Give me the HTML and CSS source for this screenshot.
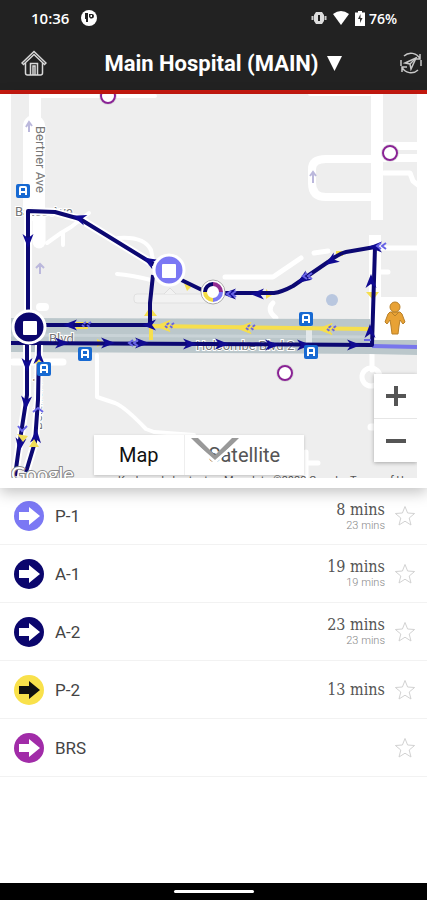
FILE: index.html
```html
<!DOCTYPE html>
<html lang="en">
<head>
    <meta charset="UTF-8">
    <meta name="viewport" content="width=device-width, initial-scale=1.0">
    <title>Main Hospital (MAIN)</title>
    <link rel="stylesheet" href="styles.css">
</head>
<body>
    <!-- Phone status bar -->
    <div class="status-bar">
        <span>10:36</span>
        <svg class="status-app" width="16" height="16" viewBox="0 0 16 16">
            <circle cx="8" cy="8" r="8" fill="#fff"/>
            <path d="M4 3h3v9H5V9H4zM8 4h3q2 0 2 2t-2 2.500H9.500L8 7z" fill="#222"/>
            <path d="M9.500 5h1.500v2H9.500z" fill="#fff"/>
        </svg>
        <div class="status-right">
            <svg width="16" height="14" viewBox="0 0 16 14">
                <path d="M5 1h6l2 3v6l-2 3H5l-2-3V4z" fill="#ddd"/>
                <path d="M1.500 5v4M14.500 5v4" stroke="#ccc" stroke-width="2"/>
                <path d="M8 4v6" stroke="#222" stroke-width="2"/>
            </svg>
            <svg width="16" height="14" viewBox="0 0 16 14"><path d="M0 3Q8-3 16 3L8 14z" fill="#fff"/></svg>
            <svg width="10" height="15" viewBox="0 0 10 15">
                <path d="M3 0h4v1.500h3V15H0V1.500h3z" fill="#fff"/>
                <path d="M5.500 3L3 8h2v4l2.500-5h-2z" fill="#333"/>
            </svg>
            <span>76%</span>
        </div>
    </div>

    <!-- Header -->
    <header class="header">
        <button class="icon-button" aria-label="Home">
            <svg width="26" height="26" viewBox="0 0 26 26" fill="none" stroke="#d8d8d8" stroke-width="1.500">
                <path d="M1 13L13 1.500 25 13l-1.500 1.500L13 4.500 2.500 14.500z"/>
                <path d="M4.500 13v10q0 2 2 2h13q2 0 2-2V13M9.500 25V13.500h7V25M12 25v-9h2v9"/>
            </svg>
        </button>
        <button class="title">Main Hospital (MAIN) <svg width="15" height="15" viewBox="0 0 15 15"><path d="M0 0h15L7.500 15z" fill="#fff"/></svg></button>
        <button class="icon-button" aria-label="Refresh location">
            <svg width="24" height="24" viewBox="0 0 24 24" fill="none" stroke="#c8c8c8" stroke-width="1.500">
                <path d="M5 5a10 10 0 0 1 16 3M21 3v5h-5M2 9v6M19 19A10 10 0 0 1 3 16M3 21v-5h5M22 15V9"/>
                <path d="M17 7L6 12l5 1 1 5z"/>
                <path d="M17 7l-6 6"/>
            </svg>
        </button>
    </header>

    <!-- Map -->
    <section class="map-section">
        <div class="map">
            <svg class="map-canvas" viewBox="11 94 406 384" preserveAspectRatio="xMidYMid slice">
                <defs>
                    <path id="arrow" d="M7 0L-7-5.500-3 0-7 5.500z"/>
                    <g id="bus">
                        <rect x="-7" y="-7" width="14" height="14" rx="2" fill="#1769d2"/>
                        <path d="M-4 4v-7q0-2 2-2h4q2 0 2 2v7H2V2h-4v2z" fill="#fff"/>
                        <path d="M-2-3h4v3h-4z" fill="#1769d2"/>
                    </g>
                    <g id="stop">
                        <circle r="9" fill="#ccc" opacity=".5"/>
                        <circle r="7" fill="#fff" stroke="#8a2395" stroke-width="2"/>
                    </g>
                    <path id="chevrons" d="M3-3L-1 0l4 3M8-3L4 0l4 3" fill="none"/>
                </defs>
                <rect x="11" y="94" width="406" height="384" fill="#eee"/>

                <!-- Roads -->
                <g fill="none" stroke="#fff" stroke-linecap="round" stroke-linejoin="round">
                    <path d="M35 90v32" stroke-width="12"/>
                    <path d="M34 126v84" stroke-width="22"/>
                    <path d="M39 214v28" stroke-width="13"/>
                    <path d="M40 96h115M310 94h60" stroke-width="4"/>
                    <path d="M377 90v130M375 235v115" stroke-width="12" stroke-linecap="butt"/>
                    <path d="M384 146h40M384 158h40" stroke-width="8"/>
                    <path d="M376 159h-50q-14 0-14 10v14q0 14 14 14h50" stroke-width="8"/>
                    <path d="M384 173h26l3 8 10 8" stroke-width="5"/>
                    <path d="M225 277h48l28-19M314 253l14-2M380 248h40M380 272h8" stroke-width="5"/>
                    <path d="M273 303q-7 7 3 15" stroke-width="5"/>
                    <path d="M47 243l14-10 10-6 18-14M63 233v12" stroke-width="4"/>
                    <path d="M118 238q26-2 33 12l3 15M117 274q14 1 34 6" stroke-width="4"/>
                    <path d="M45 307h-5" stroke-width="8"/>
                    <path d="M97 355v42l18 6q10 4 31 26l8 3 40 3" stroke-width="4"/>
                    <path d="M13 362h50M371 427h6" stroke-width="7"/>
                    <circle cx="371" cy="377" r="9" stroke-width="5"/>
                    <path d="M372 350v20" stroke-width="5"/>
                    <path d="M306 452v30M306 463h12" stroke-width="5"/>
                </g>
                <rect x="380" y="297" width="37" height="43" fill="#fff"/>
                <rect x="134" y="294" width="80" height="9" rx="3" fill="#f2f2f2" stroke="#e0e0e0"/>
                <path d="M164 294l6-6 6 6" fill="#f2f2f2" stroke="#ddd"/>
                <circle cx="332" cy="300" r="6" fill="#b9c7df"/>

                <!-- Holcombe Blvd -->
                <path d="M11 318l359 1v21h47v15l-47-1-359-2z" fill="#bbc7cb"/>
                <path d="M11 335l359 2" stroke="#c9d3d7" stroke-width="3"/>
                <path d="M309 319v34" stroke="#e3e8ea" stroke-width="6"/>

                <!-- Road names -->
                <g class="road-name">
                    <text transform="translate(36 126) rotate(90)">Bertner Ave</text>
                    <text x="15" y="216">Bates Ave</text>
                    <text x="49" y="343">Blvd</text>
                    <text x="196" y="350">Holcombe Blvd 2</text>
                    <text transform="translate(42 430) rotate(-90)">Bertner Ave</text>
                </g>
                <g fill="none" stroke="#bbb8dc" stroke-width="2">
                    <path d="M40 274v-10M36 268l4-4 4 4M313 183v-11M310 176l3-4 3 4M29 132v-10M26 127l3-5 3 4"/>
                </g>

                <!-- Yellow line -->
                <g fill="#f6df4e" stroke="#f6df4e">
                    <path d="M152 326l217 3M151 326v14" fill="none" stroke-width="4"/>
                    <use href="#arrow" transform="translate(163 326) rotate(180)"/>
                    <use href="#arrow" transform="translate(244 328) rotate(180)"/>
                    <use href="#arrow" transform="translate(325 329) rotate(180)"/>
                    <path d="M76 322h12v7H76zM97 339l8 4-8 4zM336 251h7v5h-7zM266 289l6 6-6 4zM366 292h13l-6 8zM144 316l6-9 7 9zM182 278l9 9-4 4z" stroke="none"/>
                </g>

                <!-- Blue lines -->
                <path d="M372 346l45 1" stroke="#7876ec" stroke-width="4"/>
                <g fill="none" stroke="#0c0872" stroke-width="4" stroke-linejoin="round">
                    <path class="route-edge" d="M28 312V211l27 1 25 7 70 43"/>
                    <path d="M28 312V211l27 1 25 7 70 43 19 12 33 16"/>
                    <path d="M222 293h52q8-1 19-7l35-24q10-8 18-10l29-5-3 98-361-2"/>
                    <path d="M44 325h106v-22l3-28"/>
                    <path class="route-edge" d="M27 345v50l-7 45-5 36M39 345l-1 55-3 42-9 30"/>
                    <path d="M27 345v50l-7 45-5 36M39 345l-1 55-3 42-9 30"/>
                </g>
                <g fill="#100a91">
                    <use href="#arrow" transform="translate(28 241) rotate(90)"/>
                    <use href="#arrow" transform="translate(79 218) rotate(199)"/>
                    <use href="#arrow" transform="translate(149 261) rotate(210)"/>
                    <use href="#arrow" transform="translate(70 325) rotate(180)"/>
                    <use href="#arrow" transform="translate(149 325) rotate(180)"/>
                    <use href="#arrow" transform="translate(62 343)"/>
                    <use href="#arrow" transform="translate(108 343)"/>
                    <use href="#arrow" transform="translate(142 343)"/>
                    <use href="#arrow" transform="translate(190 344)"/>
                    <use href="#arrow" transform="translate(222 344)"/>
                    <use href="#arrow" transform="translate(272 345)"/>
                    <use href="#arrow" transform="translate(304 345)"/>
                    <use href="#arrow" transform="translate(354 345)"/>
                    <use href="#arrow" transform="translate(229 294) rotate(180)"/>
                    <use href="#arrow" transform="translate(257 294) rotate(180)"/>
                    <use href="#arrow" transform="translate(303 279) rotate(146)"/>
                    <use href="#arrow" transform="translate(331 261) rotate(146)"/>
                    <use href="#arrow" transform="translate(375 247) rotate(180)"/>
                    <use href="#arrow" transform="translate(371 281) rotate(-90)"/>
                    <use href="#arrow" transform="translate(370 331) rotate(-90)"/>
                    <use href="#arrow" transform="translate(27 365) rotate(90)"/>
                    <use href="#arrow" transform="translate(26 403) rotate(95)"/>
                    <use href="#arrow" transform="translate(20 445) rotate(98)"/>
                    <use href="#arrow" transform="translate(36 436) rotate(-86)"/>
                    <use href="#arrow" transform="translate(39 357) rotate(-90)"/>
                </g>
                <g stroke="#6864e6" stroke-width="2">
                    <use href="#chevrons" x="83" y="325" stroke-dasharray="3 2"/>
                    <use href="#chevrons" x="166" y="326" stroke-dasharray="3 2"/>
                    <use href="#chevrons" x="247" y="328" stroke-dasharray="3 2"/>
                    <use href="#chevrons" x="328" y="329" stroke-dasharray="3 2"/>
                    <use href="#chevrons" x="130" y="343"/>
                    <use href="#chevrons" x="228" y="294"/>
                    <use href="#chevrons" x="304" y="276"/>
                    <use href="#chevrons" x="378" y="246"/>
                    <path d="M33 412l5-4 5 4M18 426l4 5 5-5M364 340h7" fill="none"/>
                </g>
                <path d="M17 434l11 2-5 6zM29 447l5-8 5 8zM35 364h8l-4-5z" fill="#f0dc57"/>

                <!-- Bus stops -->
                <use href="#bus" x="23" y="191"/>
                <use href="#bus" x="44" y="369"/>
                <use href="#bus" x="85" y="354"/>
                <use href="#bus" x="306" y="319"/>
                <use href="#bus" x="311" y="352"/>
                <use href="#stop" x="108" y="96"/>
                <use href="#stop" x="390" y="153"/>
                <use href="#stop" x="285" y="373"/>

                <!-- Selected stops -->
                <circle cx="29" cy="327" r="16" fill="#0b066d" stroke="#fff" stroke-width="3"/>
                <rect x="23" y="321" width="14" height="14" rx="1" fill="#fff"/>
                <circle cx="169" cy="270" r="15" fill="#7b78f4" stroke="#fff" stroke-width="3"/>
                <rect x="162" y="264" width="14" height="14" rx="1" fill="#fff"/>
                <g fill="none" stroke-width="4">
                    <circle cx="213" cy="292" r="12" fill="#fff" stroke="#aaa" stroke-width="1"/>
                    <path d="M205 292a8 8 0 0 1 8-8" stroke="#0b066d"/>
                    <path d="M213 284a8 8 0 0 1 8 8" stroke="#932d91"/>
                    <path d="M221 292a8 8 0 0 1-8 8" stroke="#7b78f4"/>
                    <path d="M213 300a8 8 0 0 1-8-8" stroke="#f4dc45"/>
                </g>

                <!-- Street view figure -->
                <g fill="#e8a235" stroke="#b98028">
                    <path d="M390 312h10l2 2 3 8-2 2-3-4-1 6-1 8h-6l-1-8-1-6-3 4-2-2 3-8z"/>
                    <circle cx="395" cy="307" r="5"/>
                    <path d="M391 312l4 4 4-4" fill="none"/>
                </g>

                <text class="map-logo" x="11" y="481">Google</text>
                <text class="map-credit" x="118" y="484">Keyboard shortcuts</text>
                <text class="map-credit" x="224" y="484">Map data ©2022 Google</text>
                <text class="map-credit" x="350" y="484">Terms of Use</text>
            </svg>
            <div class="zoom-control">
                <button aria-label="Zoom in"><svg width="20" height="20" viewBox="0 0 20 20"><path d="M10 0v20M0 10h20" stroke="#555" stroke-width="4"/></svg></button>
                <button aria-label="Zoom out"><svg width="20" height="20" viewBox="0 0 20 20"><path d="M0 10h20" stroke="#555" stroke-width="4"/></svg></button>
            </div>
            <div class="map-type">
                <button class="selected">Map</button>
                <button>Satellite</button>
            </div>
            <button class="collapse" aria-label="Collapse map">
                <svg width="52" height="30" viewBox="0 0 52 30">
                    <path d="M2 3h7l17 17L43 3h7L26 27z" fill="#999"/>
                    <path d="M2 4l24 21L50 4v3L26 29 2 7z" fill="#fff"/>
                </svg>
            </button>
        </div>
    </section>

    <!-- Routes -->
    <main>
        <svg class="symbols">
            <symbol id="route" viewBox="0 0 30 30">
                <circle cx="15" cy="15" r="15" fill="currentColor"/>
                <path d="M5 11h10V6l11 9-11 9v-5H5z" class="route-arrow"/>
            </symbol>
            <symbol id="star" viewBox="0 0 22 22">
                <path d="M11 1.500l2.600 6.500 7 .5-5.400 4.500 1.800 7-6-3.800L5 20l1.800-7L1.400 8.500l7-.5z" fill="none" stroke="#d2d2d2"/>
            </symbol>
        </svg>
        <ul class="routes">
            <li>
                <svg class="route-icon lavender"><use href="#route"/></svg>
                <span class="name">P-1</span>
                <span class="times"><b>8 mins</b><small>23 mins</small></span>
                <button class="star" aria-label="Favorite P-1"><svg width="22" height="22"><use href="#star"/></svg></button>
            </li>
            <li>
                <svg class="route-icon navy"><use href="#route"/></svg>
                <span class="name">A-1</span>
                <span class="times"><b>19 mins</b><small>19 mins</small></span>
                <button class="star" aria-label="Favorite A-1"><svg width="22" height="22"><use href="#star"/></svg></button>
            </li>
            <li>
                <svg class="route-icon navy"><use href="#route"/></svg>
                <span class="name">A-2</span>
                <span class="times"><b>23 mins</b><small>23 mins</small></span>
                <button class="star" aria-label="Favorite A-2"><svg width="22" height="22"><use href="#star"/></svg></button>
            </li>
            <li>
                <svg class="route-icon yellow"><use href="#route"/></svg>
                <span class="name">P-2</span>
                <span class="times"><b>13 mins</b></span>
                <button class="star" aria-label="Favorite P-2"><svg width="22" height="22"><use href="#star"/></svg></button>
            </li>
            <li>
                <svg class="route-icon purple"><use href="#route"/></svg>
                <span class="name">BRS</span>
                <span class="times"></span>
                <button class="star" aria-label="Favorite BRS"><svg width="22" height="22"><use href="#star"/></svg></button>
            </li>
        </ul>
    </main>

    <!-- Phone navigation bar -->
    <div class="nav-bar"><span></span></div>
</body>
</html>
```
FILE: styles.css
```css
* {
    box-sizing: border-box;
}

body {
    margin: 0;
    min-height: 100vh;
    display: flex;
    flex-direction: column;
    background-color: #fff;
    font-family: Roboto, sans-serif;
}

button {
    padding: 0;
    border: none;
    background: none;
    font-family: inherit;
    color: inherit;
    cursor: pointer;
}

svg {
    display: block;
}

/* Status bar */
.status-bar {
    display: flex;
    align-items: center;
    height: 36px;
    padding: 0 30px 0 31px;
    background-color: #222;
    color: #fff;
    font-family: "Open Sans", sans-serif;
    font-size: 15px;
    font-weight: 600;
}

.status-app {
    margin-left: 12px;
}

.status-right {
    display: flex;
    align-items: center;
    gap: 6px;
    margin-left: auto;
    font-size: 14px;
}

.status-right span {
    margin-left: -2px;
}

/* Header */
.header {
    display: flex;
    align-items: center;
    justify-content: space-between;
    height: 58px;
    padding: 0 4px 0 21px;
    border-bottom: 4px solid #c9190f;
    background-color: #222;
    color: #fff;
}

.title {
    display: flex;
    align-items: center;
    gap: 8px;
    font-size: 22px;
    font-weight: 700;
}

/* Map */
.map-section {
    padding: 0 10px 10px 11px;
    background-color: #fff;
    box-shadow: 0 4px 14px rgba(0, 0, 0, 0.25);
    z-index: 1;
}

.map {
    position: relative;
    overflow: hidden;
}

.map-canvas {
    width: 100%;
    height: 384px;
}

.route-edge {
    stroke: #fff;
    stroke-width: 8px;
}

.road-name text {
    font-size: 13px;
    fill: #777;
    stroke: #fff;
    stroke-width: 2px;
    paint-order: stroke;
}

.map-logo {
    font-family: Lato, sans-serif;
    font-size: 20px;
    fill: #fff;
    stroke: #888;
    stroke-width: 2px;
    paint-order: stroke;
}

.map-credit {
    font-size: 11px;
    fill: #555;
}

.zoom-control {
    position: absolute;
    top: 280px;
    right: 0;
    width: 43px;
    background-color: #fff;
    box-shadow: 0 1px 4px rgba(0, 0, 0, 0.3);
}

.zoom-control button {
    display: flex;
    align-items: center;
    justify-content: center;
    width: 100%;
    height: 44px;
}

.zoom-control button + button {
    border-top: 1px solid #e6e6e6;
}

.map-type {
    position: absolute;
    left: 83px;
    bottom: 3px;
    display: flex;
    height: 40px;
    background-color: #fff;
    box-shadow: 0 1px 3px rgba(0, 0, 0, 0.2);
}

.map-type button {
    padding: 0 25px;
    font-size: 20px;
    color: #555;
}

.map-type button + button {
    padding: 0 24px;
    border-left: 1px solid #eee;
}

.map-type .selected {
    color: #111;
}

.collapse {
    position: absolute;
    left: 178px;
    bottom: 13px;
}

/* Routes */
main {
    flex: 1;
}

.symbols {
    position: absolute;
    width: 0;
    height: 0;
}

.routes {
    margin: 0;
    padding: 0;
    list-style: none;
}

.routes li {
    display: flex;
    align-items: center;
    height: 58px;
    padding: 0 11px 0 14px;
    border-bottom: 1px solid #f2f2f2;
}

.routes li:first-child {
    height: 57px;
}

.route-icon {
    width: 30px;
    height: 30px;
}

.route-arrow {
    fill: var(--arrow, #fff);
}

.lavender {
    color: #7b78f4;
}

.navy {
    color: #0b066d;
}

.yellow {
    --arrow: #111;
    color: #f9e14b;
}

.purple {
    color: #a12ca8;
}

.name {
    margin-left: 11px;
    font-size: 17px;
    color: #444;
}

.times {
    display: flex;
    flex-direction: column;
    margin-left: auto;
    text-align: right;
}

.times b {
    font-family: "DejaVu Serif Condensed", "DejaVu Serif", serif;
    font-size: 16px;
    line-height: 18px;
    font-weight: 400;
    color: #555;
}

.times small {
    font-size: 11px;
    line-height: 13px;
    font-weight: 300;
    color: #888;
}

.star {
    margin-left: 9px;
}

/* Navigation bar */
.nav-bar {
    display: flex;
    align-items: center;
    justify-content: center;
    height: 17px;
    background-color: #000;
}

.nav-bar span {
    width: 80px;
    height: 3px;
    border-radius: 2px;
    background-color: #fff;
}
```
